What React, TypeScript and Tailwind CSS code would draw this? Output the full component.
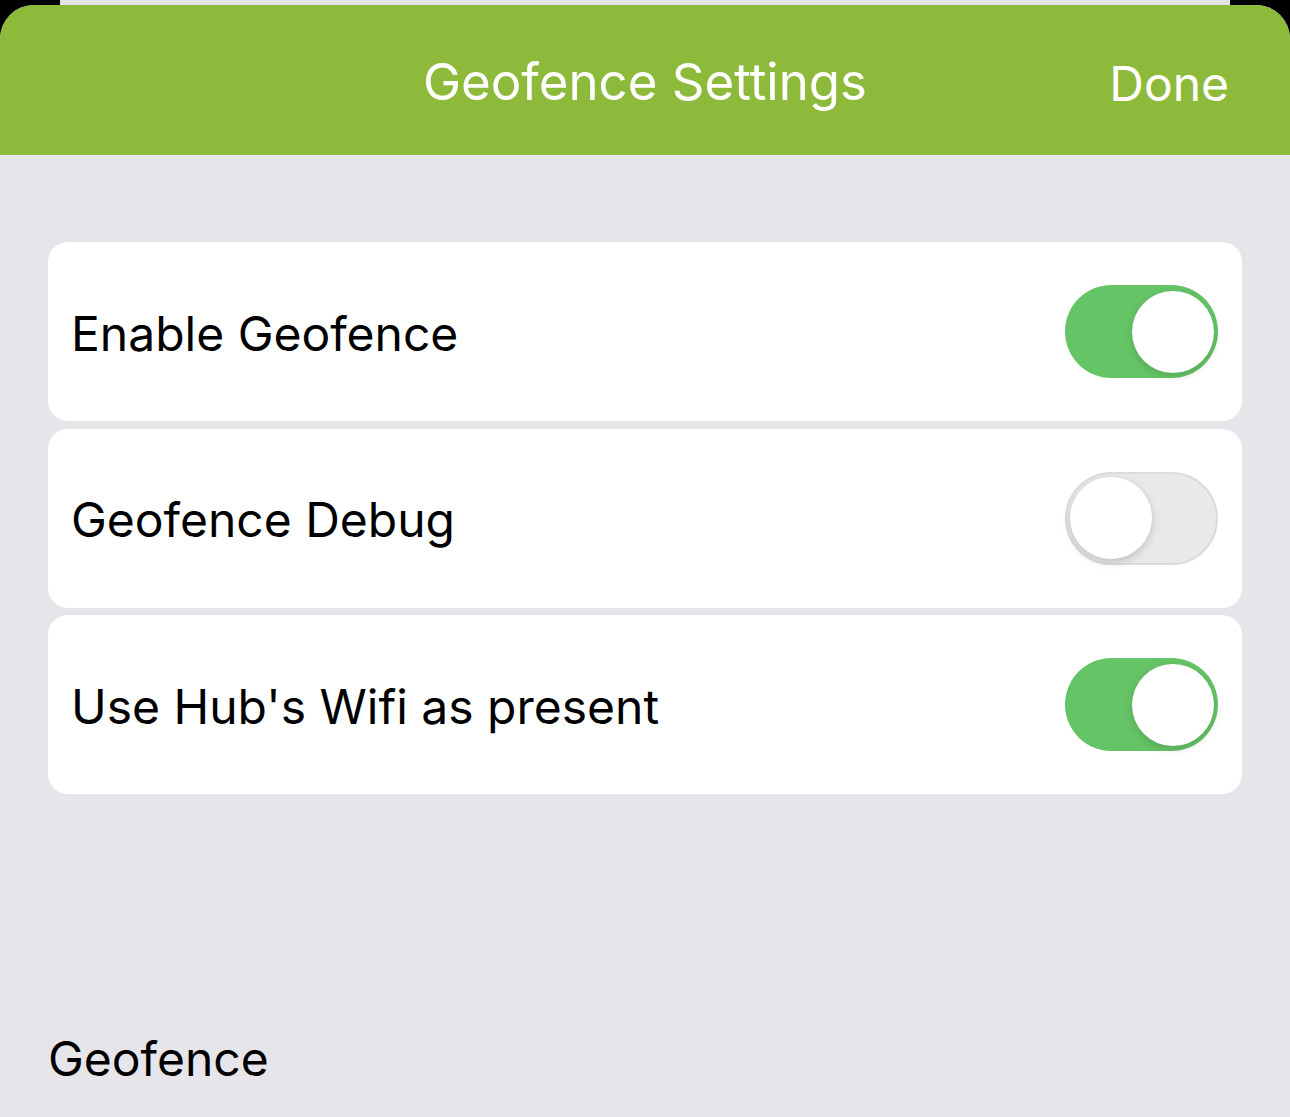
import React from "react";

function Toggle({ on }: { on: boolean }) {
  return on ? (
    <div className="w-[153px] h-[93px] rounded-full bg-[#65c466] flex items-center justify-end pr-[4px]">
      <div className="w-[82px] h-[82px] rounded-full bg-white shadow-[0_3px_8px_rgba(0,0,0,0.15)]" />
    </div>
  ) : (
    <div className="w-[153px] h-[93px] rounded-full bg-[#e9e9ea] border-[2px] border-[#dcdcdd] flex items-center justify-start pl-[3px]">
      <div className="w-[82px] h-[82px] rounded-full bg-white shadow-[0_3px_8px_rgba(0,0,0,0.18)]" />
    </div>
  );
}

function Row({ label, on }: { label: string; on: boolean }) {
  return (
    <div className="h-[179px] bg-white rounded-[20px] flex items-center justify-between pl-[23px] pr-[24px]">
      <span className="text-[48px] text-black leading-none pt-[4px]">{label}</span>
      <Toggle on={on} />
    </div>
  );
}

export default function App() {
  return (
    <div
      className="w-[1290px] h-[1117px] bg-black flex flex-col overflow-hidden"
      style={{ fontFamily: "Inter, 'Noto Sans', sans-serif" }}
    >
      <div className="h-[5px] flex">
        <div className="w-[60px]" />
        <div className="w-[1170px] bg-[#e4e4e4]" />
      </div>
      <div className="flex-1 flex flex-col rounded-t-[34px] overflow-hidden bg-[#e5e5ea]">
        <div className="h-[150px] bg-[#8eba3c] flex items-center relative">
          <div className="flex-1 text-center text-white text-[51px] pt-[2px] leading-none">Geofence Settings</div>
          <div className="absolute right-[61px] top-[55px] text-white text-[48px] leading-none">Done</div>
        </div>
        <div className="flex flex-col gap-[7.5px] px-[48px] mt-[87px]">
          <Row label="Enable Geofence" on={true} />
          <Row label="Geofence Debug" on={false} />
          <Row label="Use Hub's Wifi as present" on={true} />
        </div>
        <div className="mt-[241px] pl-[48px] text-[48px] text-black leading-none">Geofence</div>
      </div>
    </div>
  );
}
